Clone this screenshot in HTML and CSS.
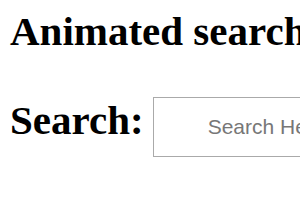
FILE: index.html
```html
<!DOCTYPE html>
<html>
<head>
<meta charset="utf-8">
<link rel="stylesheet" href="styles.css">
</head>
<body>
<h1 class="title">Animated search</h1>
<div class="row">
  <label class="label" for="q">Search:</label>
  <input class="search" id="q" type="text" placeholder="Search Here">
</div>
</body>
</html>
```
FILE: styles.css
```css
html, body {
  margin: 0;
  padding: 0;
  background: #fff;
  overflow: hidden;
}
body {
  padding: 8px 0 0 10px;
  font-family: "Liberation Serif", "Times New Roman", serif;
  color: #000;
}
.title {
  margin: 0;
  font-size: 41px;
  line-height: 46px;
  font-weight: bold;
  white-space: nowrap;
}
.row {
  display: flex;
  align-items: flex-start;
  gap: 9px;
  margin-top: 43px;
}
.label {
  font-size: 41px;
  line-height: 46px;
  font-weight: bold;
  white-space: nowrap;
}
.search {
  box-sizing: border-box;
  width: 220px;
  height: 60px;
  flex: none;
  margin: 0;
  padding: 0 0 0 54px;
  border: 1px solid #aaa;
  border-radius: 0;
  outline: none;
  font-family: "Liberation Sans", Arial, sans-serif;
  font-size: 21px;
  color: #333;
  background: #fff;
}
.search::placeholder {
  color: #777;
}
```
